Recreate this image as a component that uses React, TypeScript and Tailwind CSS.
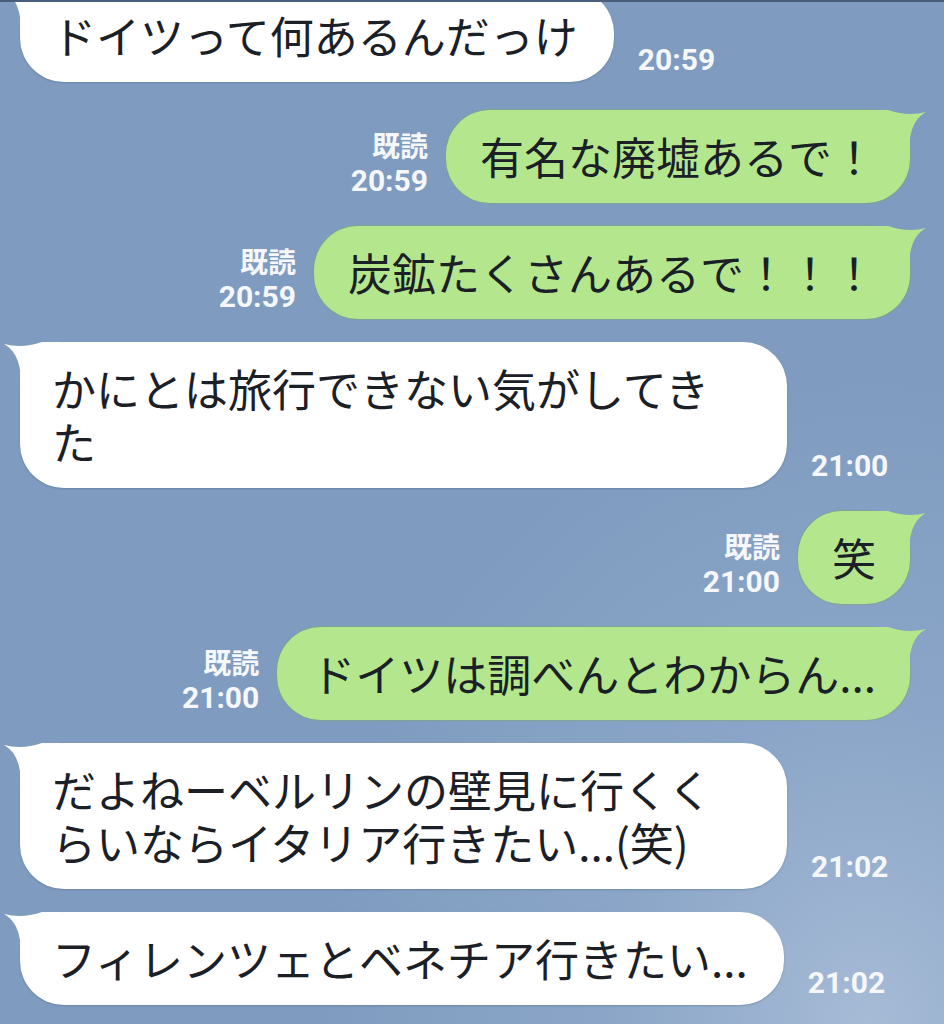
import React from "react";

type Msg =
  | { side: "in"; text: string; time: string }
  | { side: "out"; text: string; time: string };

const messages: Msg[] = [
  { side: "in", text: "ドイツって何あるんだっけ", time: "20:59" },
  { side: "out", text: "有名な廃墟あるで！", time: "20:59" },
  { side: "out", text: "炭鉱たくさんあるで！！！", time: "20:59" },
  { side: "in", text: "かにとは旅行できない気がしてきた", time: "21:00" },
  { side: "out", text: "笑", time: "21:00" },
  { side: "out", text: "ドイツは調べんとわからん...", time: "21:00" },
  { side: "in", text: "だよねーベルリンの壁見に行くくらいならイタリア行きたい...(笑)", time: "21:02" },
  { side: "in", text: "フィレンツェとベネチア行きたい...", time: "21:02" },
];

// bubble tail, drawn for the left side; the right one is mirrored
const Tail = ({ color, right }: { color: string; right?: boolean }) => (
  <svg
    width="60"
    height="50"
    viewBox="0 0 60 50"
    className={
      right
        ? "absolute top-0 right-[-18px] -scale-x-100"
        : "absolute top-0 left-[-18px]"
    }
  >
    <path d="M2 2 Q20 7 40 0 L60 0 L60 50 L18 50 L18 28 Q15 9 2 2 Z" fill={color} />
  </svg>
);

const TimeText = ({ time }: { time: string }) => (
  <div className="font-['Roboto','Noto_Sans_CJK_JP',sans-serif] font-bold text-[30px] leading-[35px] text-[#f5f7fa]">
    {time}
  </div>
);

const Incoming = ({ text, time }: { text: string; time: string }) => (
  <div className="flex items-end pl-[20px]">
    <div className="relative max-w-[767px] rounded-[44px] bg-white pl-[32px] pr-[36px] py-[20px] text-[44px] leading-[53px] text-[#1b2027] shadow-[0_1px_2px_rgba(40,60,90,0.25)]">
      <Tail color="#ffffff" />
      <span className="relative">{text}</span>
    </div>
    <div className="ml-[24px] mb-[5px]">
      <TimeText time={time} />
    </div>
  </div>
);

const Outgoing = ({ text, time }: { text: string; time: string }) => (
  <div className="flex items-end justify-end pr-[34px]">
    <div className="mr-[18px] mb-[5px] flex flex-col items-end">
      <div className="font-['Noto_Sans_CJK_JP',sans-serif] font-bold text-[28px] leading-[35px] text-[#f5f7fa]">
        既読
      </div>
      <TimeText time={time} />
    </div>
    <div className="relative rounded-[44px] bg-[#b4e78d] px-[34px] py-[20px] text-[44px] leading-[53px] text-[#1b2027] shadow-[0_0_1px_1px_rgba(120,170,90,0.45)]">
      <Tail color="#b4e78d" right />
      <span className="relative">{text}</span>
    </div>
  </div>
);

const App = () => {
  return (
    <div className="relative w-[944px] h-[1024px] overflow-hidden bg-[#7f9cc0] bg-[radial-gradient(ellipse_at_92%_100%,#a6bbd6_0%,#8aa5c7_22%,#7f9cc0_45%)] font-['Noto_Sans_CJK_JP',sans-serif]">
      <div className="absolute top-0 left-0 right-0 h-[2px] bg-[#4a5e7a] z-10" />
      <div className="flex flex-col gap-[23px] -mt-[11px]">
        {messages.map((m, i) => (
          <div key={i} className={i === 1 ? "mt-[5px]" : ""}>
            {m.side === "in" ? (
              <Incoming text={m.text} time={m.time} />
            ) : (
              <Outgoing text={m.text} time={m.time} />
            )}
          </div>
        ))}
      </div>
    </div>
  );
};

export default App;
